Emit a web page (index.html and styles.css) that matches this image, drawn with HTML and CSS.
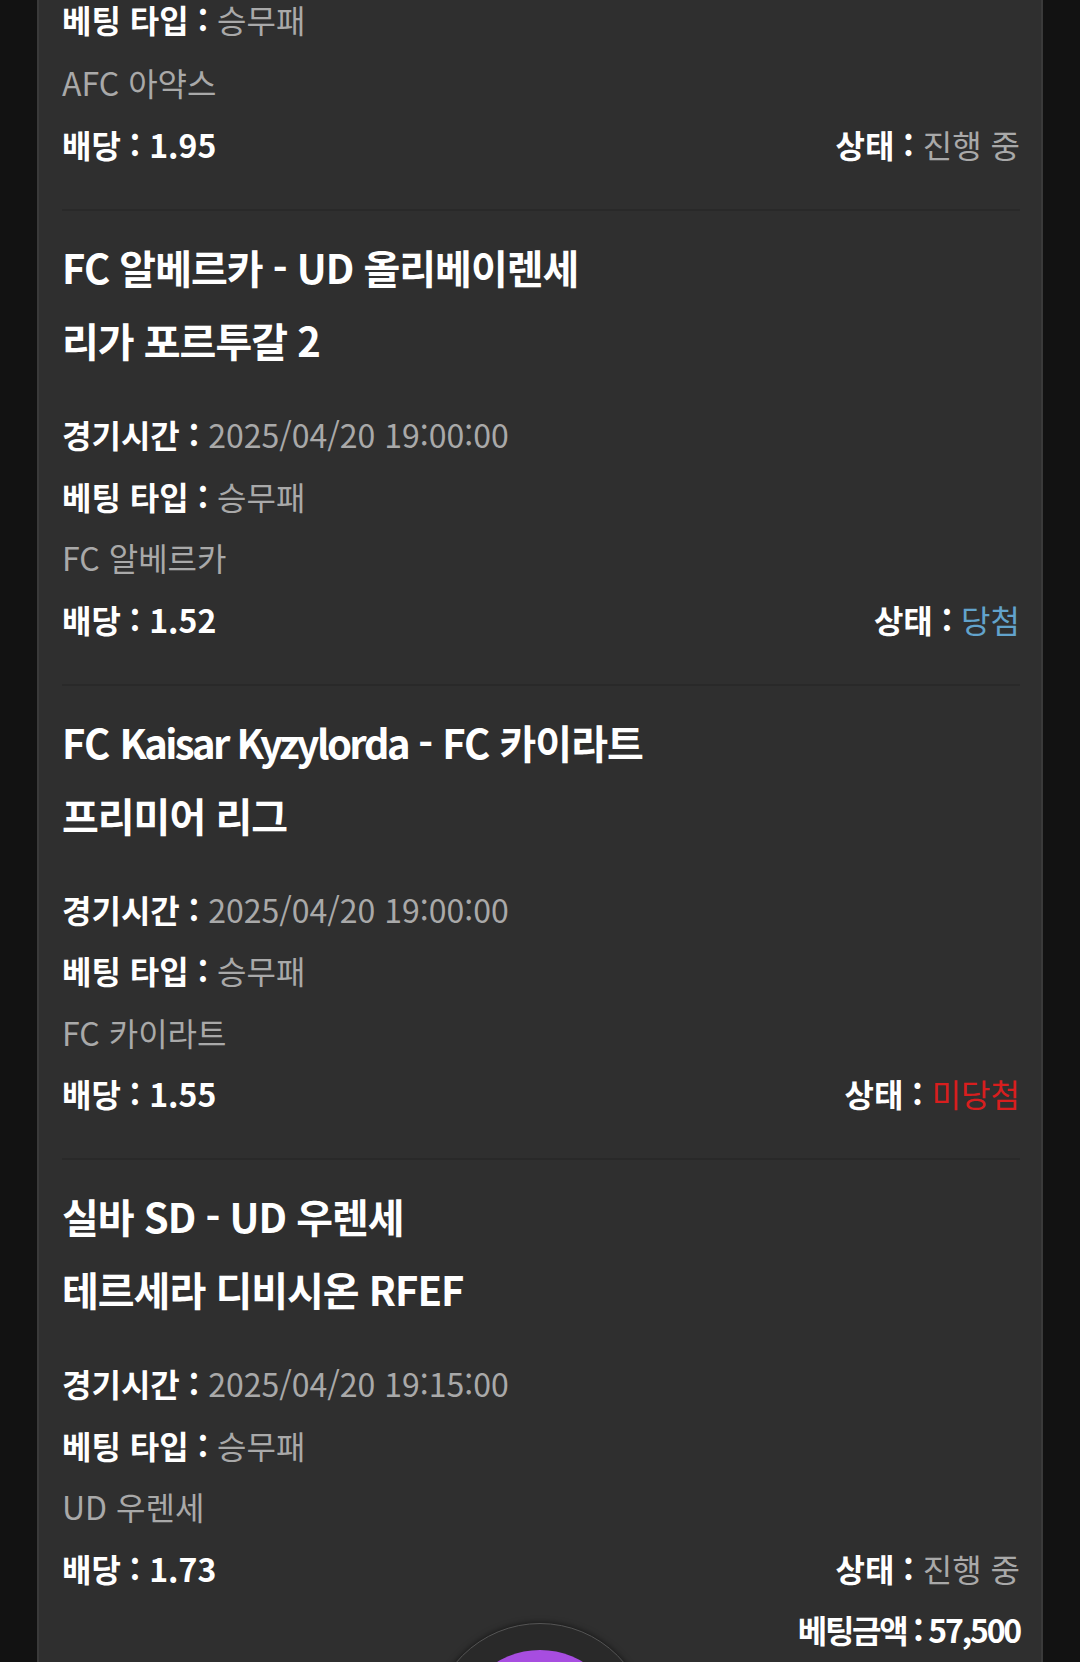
FILE: index.html
```html
<!DOCTYPE html>
<html lang="ko">
<head>
<meta charset="utf-8">
<link rel="stylesheet" href="styles.css">
</head>
<body>
<div class="panel">
  <div class="card partial">
    <div class="row first"><span class="lbl">베팅 타입 : </span><span class="val">승무패</span></div>
    <div class="row"><span class="val">AFC 아약스</span></div>
    <div class="row split"><span><span class="lbl">배당 : 1.95</span></span><span><span class="lbl">상태 : </span><span class="val">진행 중</span></span></div>
  </div>
  <div class="card">
    <div class="title">FC 알베르카 - UD 올리베이렌세</div>
    <div class="title">리가 포르투갈 2</div>
    <div class="rows">
      <div class="row"><span class="lbl">경기시간 : </span><span class="val">2025/04/20 19:00:00</span></div>
      <div class="row"><span class="lbl">베팅 타입 : </span><span class="val">승무패</span></div>
      <div class="row"><span class="val">FC 알베르카</span></div>
      <div class="row split"><span class="lbl">배당 : 1.52</span><span><span class="lbl">상태 : </span><span class="val win">당첨</span></span></div>
    </div>
  </div>
  <div class="card">
    <div class="title">FC <span class="narrow">Kaisar Kyzylorda</span> - FC 카이라트</div>
    <div class="title">프리미어 리그</div>
    <div class="rows">
      <div class="row"><span class="lbl">경기시간 : </span><span class="val">2025/04/20 19:00:00</span></div>
      <div class="row"><span class="lbl">베팅 타입 : </span><span class="val">승무패</span></div>
      <div class="row"><span class="val">FC 카이라트</span></div>
      <div class="row split"><span class="lbl">배당 : 1.55</span><span><span class="lbl">상태 : </span><span class="val lose">미당첨</span></span></div>
    </div>
  </div>
  <div class="card last">
    <div class="title">실바 SD - UD 우렌세</div>
    <div class="title">테르세라 디비시온 RFEF</div>
    <div class="rows">
      <div class="row"><span class="lbl">경기시간 : </span><span class="val">2025/04/20 19:15:00</span></div>
      <div class="row"><span class="lbl">베팅 타입 : </span><span class="val">승무패</span></div>
      <div class="row"><span class="val">UD 우렌세</span></div>
      <div class="row split"><span class="lbl">배당 : 1.73</span><span><span class="lbl">상태 : </span><span class="val">진행 중</span></span></div>
      <div class="row amount"><span class="lbl">베팅금액 : 57,500</span></div>
    </div>
  </div>
</div>
<div class="fab"><div class="fab-inner"></div></div>
</body>
</html>
```

FILE: styles.css
```css
html, body {
  margin: 0;
  padding: 0;
  background: #121212;
  height: 1662px;
  overflow: hidden;
}
body {
  font-family: "Noto Sans CJK KR", "Noto Sans", sans-serif;
  color: #ffffff;
}
.panel {
  margin: 0 37px;
  background: #2f2f2f;
  border-left: 2px solid #3a3a3a;
  border-right: 2px solid #3a3a3a;
  padding: 0 21px 0 23px;
  min-height: 1662px;
  box-sizing: border-box;
}
.card {
  padding: 20px 0 33px;
  border-bottom: 2px solid #292929;
}
.card.partial {
  padding-top: 0;
  padding-bottom: 34px;
}
.card.last {
  border-bottom: none;
}
.title {
  font-size: 40px;
  font-weight: 700;
  line-height: 73px;
  letter-spacing: -1px;
}
.narrow {
  letter-spacing: -2.6px;
}
.rows {
  margin-top: 27px;
}
.row {
  font-size: 32px;
  line-height: 61.6px;
  height: 61.6px;
  white-space: pre;
}
.row.first {
  line-height: 38px;
  height: 38px;
  margin-bottom: 14px;
}
.row.split {
  display: flex;
  justify-content: space-between;
}
.row.amount {
  display: flex;
  justify-content: flex-end;
  letter-spacing: -2.2px;
}
.lbl {
  font-weight: 700;
  color: #ffffff;
}
.val {
  font-weight: 400;
  color: #a9a9a9;
}
.val.win {
  color: #62a3cc;
}
.val.lose {
  color: #d81e1e;
}
.fab {
  position: fixed;
  left: 430px;
  top: 1623px;
  width: 220px;
  height: 220px;
  border-radius: 50%;
  background: #292929;
  border: 1px solid #555555;
  box-sizing: border-box;
  box-shadow: 0 0 6px rgba(0,0,0,0.6);
  display: flex;
  justify-content: center;
  align-items: center;
}
.fab-inner {
  width: 166px;
  height: 166px;
  border-radius: 50%;
  background: #a74de0;
}
```
